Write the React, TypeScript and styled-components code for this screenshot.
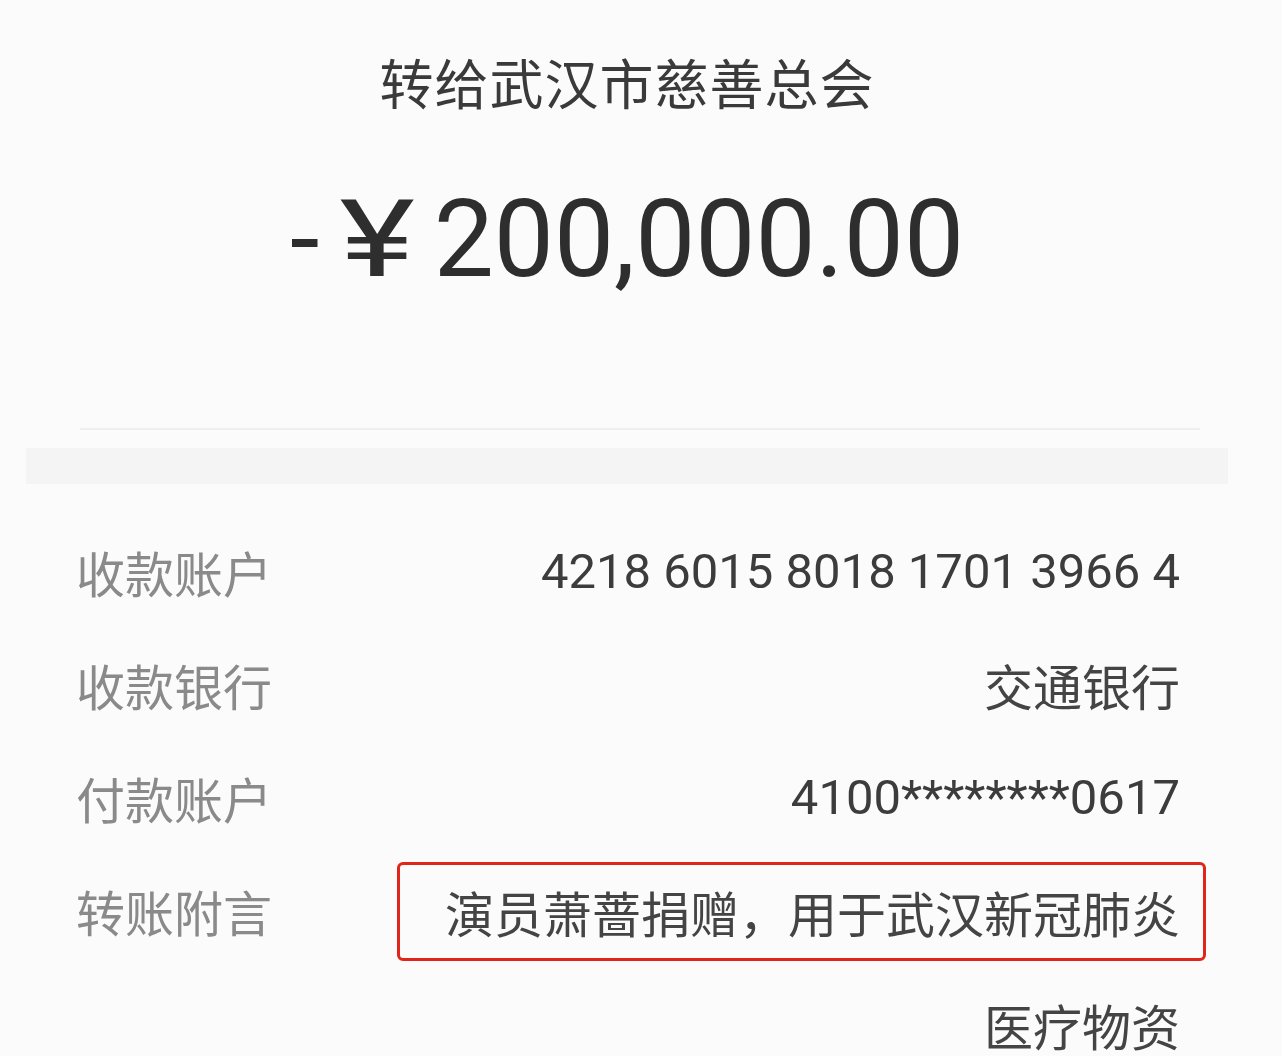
import styled, { createGlobalStyle } from 'styled-components'

const GlobalStyle = createGlobalStyle`
  html, body {
    margin: 0;
    padding: 0;
    background: #fbfbfb;
  }
  body {
    font-family: Roboto, "Noto Sans CJK SC", sans-serif;
  }
`

const Page = styled.div`
  width: 1282px;
  height: 1056px;
  overflow: hidden;
  background: #fbfbfb;
`

const Header = styled.div`
  height: 428px;
  padding-right: 28px;
  display: flex;
  flex-direction: column;
  align-items: center;
`

const Title = styled.div`
  margin-top: 49px;
  font-family: "Noto Sans CJK SC", sans-serif;
  font-size: 54px;
  line-height: 66px;
  color: #3a3a3a;
  letter-spacing: 1px;
`

const Amount = styled.div`
  margin-top: 71px;
  display: flex;
  align-items: baseline;
  font-family: Roboto, sans-serif;
  font-size: 107px;
  line-height: 107px;
  color: #2e2e2e;
`

const Minus = styled.span`
  margin-right: 29px;
`

// the yen sign in the slip is wider than Roboto's, so it is stretched a little
const Yen = styled.span`
  display: inline-block;
  margin-right: 29px;
  transform: scaleX(1.34);
`

const Divider = styled.div`
  margin: 0 82px 0 80px;
  height: 2px;
  background: #efeff3;
`

const Band = styled.div`
  margin: 18px 54px 0 26px;
  height: 36px;
  background: #f4f4f4;
`

const List = styled.div`
  display: flex;
  flex-direction: column;
  padding: 31px 102px 0 76px;
`

const Row = styled.div`
  display: flex;
  justify-content: space-between;
  align-items: flex-start;
  min-height: 113px;
`

const Label = styled.div`
  font-family: "Noto Sans CJK SC", sans-serif;
  font-size: 49px;
  line-height: 113px;
  color: #8a8a8a;
  white-space: nowrap;
`

const Value = styled.div<{ $cjk?: boolean }>`
  font-family: ${({ $cjk }) => ($cjk ? '"Noto Sans CJK SC", sans-serif' : 'Roboto, sans-serif')};
  font-size: 49px;
  line-height: 113px;
  color: ${({ $cjk }) => ($cjk ? '#444444' : '#3c3c3c')};
  text-align: right;
  white-space: nowrap;
`

const ValueStack = styled.div`
  display: flex;
  flex-direction: column;
  align-items: flex-end;
`

const Highlight = styled.div`
  margin: 8px -26px 0 0;
  padding: 0 23px 0 45px;
  border: 3px solid #e1251b;
  border-radius: 6px;
  font-family: "Noto Sans CJK SC", sans-serif;
  font-size: 49px;
  line-height: 93px;
  color: #444444;
  white-space: nowrap;
`

const NextLine = styled.div`
  margin-top: 7px;
  font-family: "Noto Sans CJK SC", sans-serif;
  font-size: 49px;
  line-height: 113px;
  color: #444444;
`

export default function App() {
  return (
    <>
      <GlobalStyle />
      <Page>
        <Header>
          <Title>转给武汉市慈善总会</Title>
          <Amount>
            <Minus>-</Minus>
            <Yen>¥</Yen>
            <span>200,000.00</span>
          </Amount>
        </Header>
        <Divider />
        <Band />
        <List>
          <Row>
            <Label>收款账户</Label>
            <Value>4218 6015 8018 1701 3966 4</Value>
          </Row>
          <Row>
            <Label>收款银行</Label>
            <Value $cjk>交通银行</Value>
          </Row>
          <Row>
            <Label>付款账户</Label>
            <Value>4100********0617</Value>
          </Row>
          <Row>
            <Label>转账附言</Label>
            <ValueStack>
              <Highlight>演员萧蔷捐赠，用于武汉新冠肺炎</Highlight>
              <NextLine>医疗物资</NextLine>
            </ValueStack>
          </Row>
        </List>
      </Page>
    </>
  )
}
